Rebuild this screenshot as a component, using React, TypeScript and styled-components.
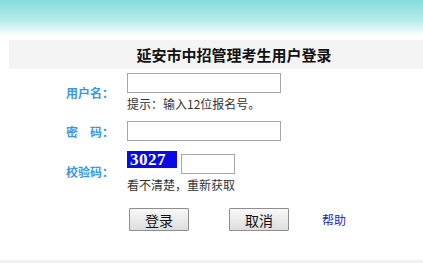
import React from "react";
import styled, { createGlobalStyle } from "styled-components";

const GlobalStyle = createGlobalStyle`
  body {
    margin: 0;
    background: #fff;
    overflow: hidden;
    font-family: "Noto Sans CJK SC", "Noto Sans", sans-serif;
    font-size: 12px;
  }
`;

const TopBand = styled.div`
  height: 36px;
  background: linear-gradient(to bottom, #84dcdd 0%, #b6ebea 55%, #ffffff 100%);
`;

const LoginBox = styled.div`
  margin: 4px 0 0 9px;
`;

const TitleBar = styled.div`
  height: 29px;
  padding-left: 36px;
  background: #f4f4f4;
  display: flex;
  align-items: center;
  justify-content: center;
  font-size: 15px;
  font-weight: bold;
  color: #111;
`;

const Form = styled.div`
  display: grid;
  grid-template-columns: 118px 1fr;
  row-gap: 10px;
  padding-top: 4px;
`;

const Label = styled.div`
  display: flex;
  align-items: center;
  justify-content: flex-end;
  padding-right: 13px;
  color: #3a98e0;
  font-weight: bold;
  font-size: 12px;
  white-space: pre;
`;

const Field = styled.div`
  display: flex;
  flex-direction: column;
  align-items: flex-start;
`;

const TextBox = styled.input<{ $w: number }>`
  box-sizing: border-box;
  width: ${(p) => p.$w}px;
  height: 20px;
  border: 1px solid #a6a6a6;
  background: #fff;
  margin: 0;
  padding: 0 3px;
  outline: none;
`;

const Hint = styled.div`
  margin-top: 3px;
  color: #333;
  font-size: 12px;
  line-height: 15px;
`;

const CodeRow = styled.div`
  display: flex;
  align-items: flex-start;
  gap: 4px;
`;

const CodeImage = styled.div`
  width: 50px;
  height: 17px;
  background: #0a0ae6;
  color: #fff;
  font-family: "Liberation Serif", serif;
  font-weight: bold;
  font-size: 17px;
  line-height: 17px;
  padding-left: 3px;
  box-sizing: border-box;
  letter-spacing: 0.5px;
`;

const CodeInput = styled(TextBox)`
  margin-top: 3px;
`;

const Actions = styled.div`
  display: flex;
  align-items: center;
  margin: 16px 0 0 120px;
`;

const Button = styled.button`
  width: 60px;
  height: 23px;
  border: 1px solid #8e8e8e;
  border-radius: 1px;
  background: linear-gradient(to bottom, #f8f8f8, #dedede);
  font-family: "Noto Sans CJK SC", sans-serif;
  font-size: 14px;
  color: #111;
  padding: 0;
  margin-right: 40px;
  line-height: 20px;
`;

const HelpLink = styled.a`
  color: #1d1dd0;
  text-decoration: none;
  font-size: 12px;
  margin-left: -7px;
`;

const BottomLine = styled.div`
  position: fixed;
  left: 0;
  right: 0;
  bottom: 0;
  height: 3px;
  background: #f2f2f2;
`;

export default function App() {
  return (
    <>
      <GlobalStyle />
      <TopBand />
      <LoginBox>
        <TitleBar>延安市中招管理考生用户登录</TitleBar>
        <Form>
          <Label>用户名：</Label>
          <Field>
            <TextBox $w={154} type="text" />
            <Hint>提示：输入12位报名号。</Hint>
          </Field>
          <Label>{"密　码："}</Label>
          <Field>
            <TextBox $w={154} type="password" />
          </Field>
          <Label>校验码：</Label>
          <Field>
            <CodeRow>
              <CodeImage>3027</CodeImage>
              <CodeInput $w={54} type="text" />
            </CodeRow>
            <Hint>看不清楚，重新获取</Hint>
          </Field>
        </Form>
        <Actions>
          <Button>登录</Button>
          <Button>取消</Button>
          <HelpLink href="#">帮助</HelpLink>
        </Actions>
      </LoginBox>
      <BottomLine />
    </>
  );
}
